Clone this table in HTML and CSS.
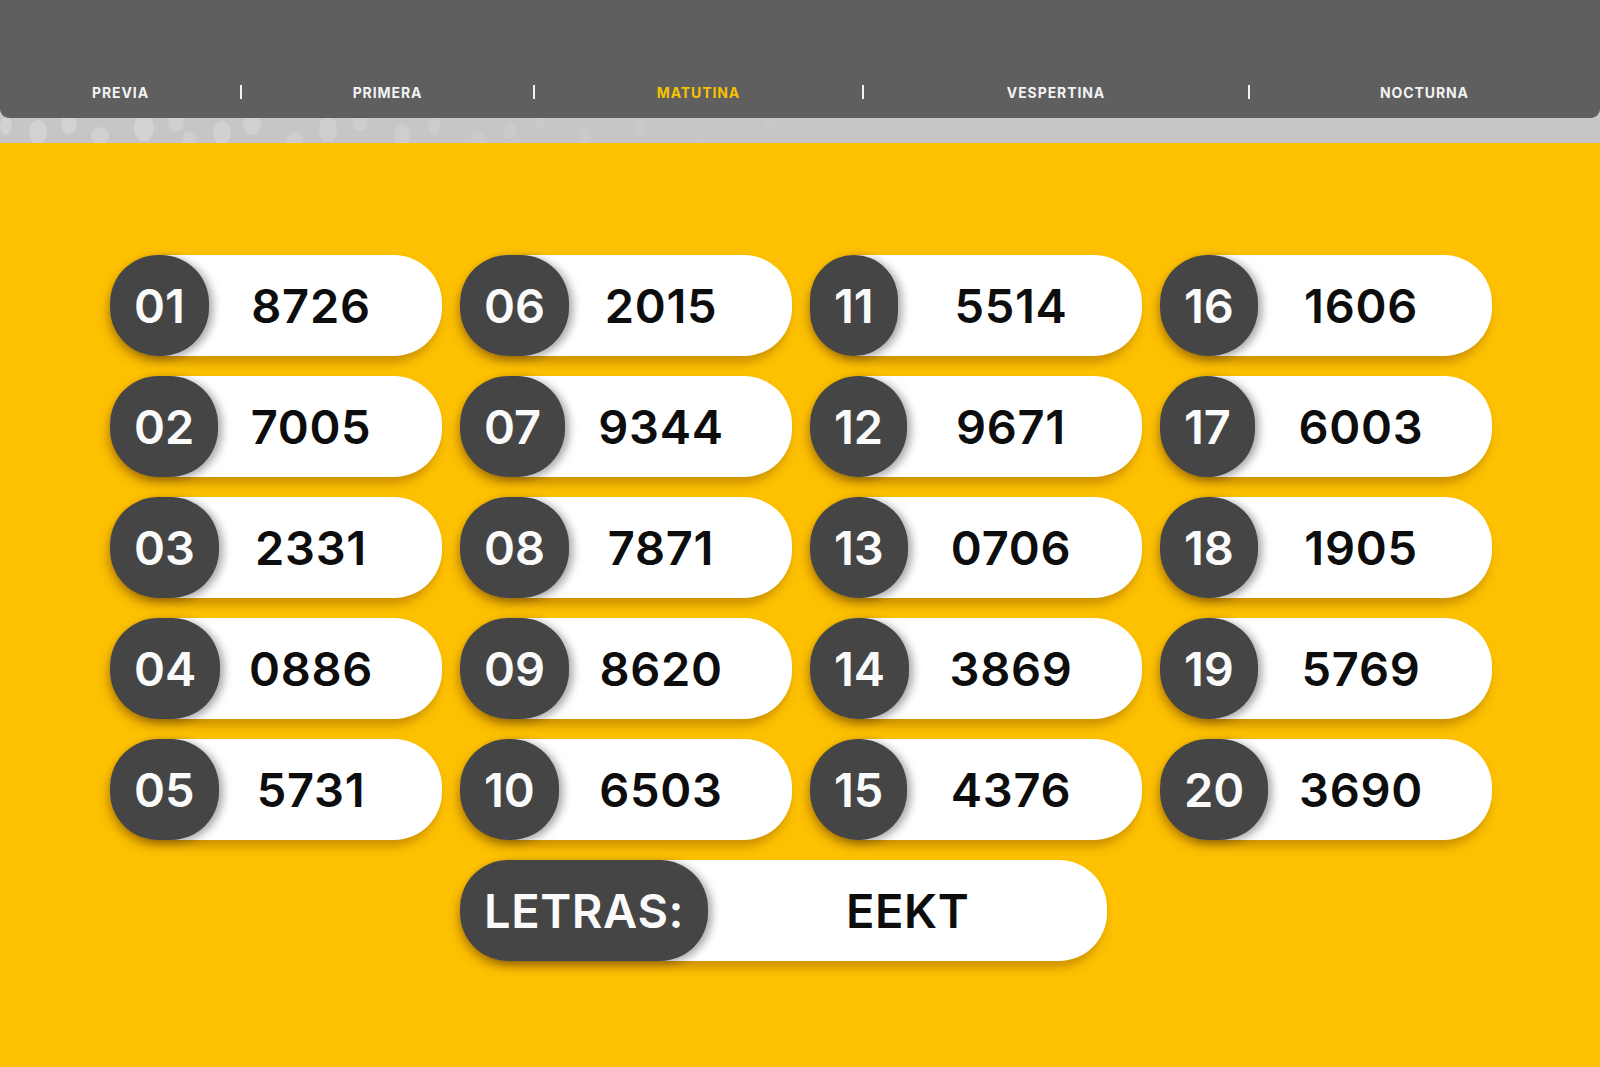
FILE: index.html
```html
<!DOCTYPE html>
<html lang="es">
<head>
<meta charset="utf-8">
<title>Resultados</title>
<link rel="stylesheet" href="styles.css">
</head>
<body>
<header class="top">
  <nav class="nav">
    <div class="nav-cell"><span class="nav-item">PREVIA</span></div>
    <div class="nav-cell sep"><span class="nav-item">PRIMERA</span></div>
    <div class="nav-cell sep"><span class="nav-item active">MATUTINA</span></div>
    <div class="nav-cell sep"><span class="nav-item">VESPERTINA</span></div>
    <div class="nav-cell sep"><span class="nav-item">NOCTURNA</span></div>
  </nav>
  <div class="strip">
    <svg class="dots" width="1600" height="26" viewBox="0 0 1600 26">
      <g fill="#dcdcdc">
        <ellipse cx="6" cy="8" rx="6" ry="9" opacity=".55"/>
        <ellipse cx="38" cy="14" rx="9" ry="12" opacity=".55"/>
        <ellipse cx="69" cy="6" rx="8" ry="10" opacity=".55"/>
        <ellipse cx="100" cy="18" rx="9" ry="9" opacity=".45"/>
        <ellipse cx="144" cy="10" rx="10" ry="13" opacity=".55"/>
        <ellipse cx="176" cy="5" rx="8" ry="9" opacity=".4"/>
        <ellipse cx="189" cy="21" rx="7" ry="7" opacity=".4"/>
        <ellipse cx="222" cy="15" rx="9" ry="12" opacity=".5"/>
        <ellipse cx="252" cy="6" rx="9" ry="11" opacity=".45"/>
        <ellipse cx="295" cy="22" rx="8" ry="8" opacity=".35"/>
        <ellipse cx="328" cy="11" rx="9" ry="13" opacity=".4"/>
        <ellipse cx="360" cy="5" rx="8" ry="8" opacity=".35"/>
        <ellipse cx="402" cy="17" rx="8" ry="11" opacity=".35"/>
        <ellipse cx="434" cy="8" rx="6" ry="9" opacity=".3"/>
        <ellipse cx="478" cy="21" rx="7" ry="7" opacity=".25"/>
        <ellipse cx="510" cy="12" rx="6" ry="9" opacity=".25"/>
        <ellipse cx="540" cy="4" rx="5" ry="6" opacity=".2"/>
        <ellipse cx="585" cy="18" rx="6" ry="8" opacity=".18"/>
        <ellipse cx="640" cy="9" rx="6" ry="8" opacity=".14"/>
        <ellipse cx="700" cy="16" rx="6" ry="8" opacity=".1"/>
        <ellipse cx="770" cy="7" rx="6" ry="7" opacity=".07"/>
      </g>
    </svg>
  </div>
</header>

<main class="board">
  <div class="pill r1 c1"><span class="badge">01</span><span class="num">8726</span></div>
  <div class="pill r2 c1"><span class="badge">02</span><span class="num">7005</span></div>
  <div class="pill r3 c1"><span class="badge">03</span><span class="num">2331</span></div>
  <div class="pill r4 c1"><span class="badge">04</span><span class="num">0886</span></div>
  <div class="pill r5 c1"><span class="badge">05</span><span class="num">5731</span></div>

  <div class="pill r1 c2"><span class="badge">06</span><span class="num">2015</span></div>
  <div class="pill r2 c2"><span class="badge">07</span><span class="num">9344</span></div>
  <div class="pill r3 c2"><span class="badge">08</span><span class="num">7871</span></div>
  <div class="pill r4 c2"><span class="badge">09</span><span class="num">8620</span></div>
  <div class="pill r5 c2"><span class="badge">10</span><span class="num">6503</span></div>

  <div class="pill r1 c3"><span class="badge">11</span><span class="num">5514</span></div>
  <div class="pill r2 c3"><span class="badge">12</span><span class="num">9671</span></div>
  <div class="pill r3 c3"><span class="badge">13</span><span class="num">0706</span></div>
  <div class="pill r4 c3"><span class="badge">14</span><span class="num">3869</span></div>
  <div class="pill r5 c3"><span class="badge">15</span><span class="num">4376</span></div>

  <div class="pill r1 c4"><span class="badge">16</span><span class="num">1606</span></div>
  <div class="pill r2 c4"><span class="badge">17</span><span class="num">6003</span></div>
  <div class="pill r3 c4"><span class="badge">18</span><span class="num">1905</span></div>
  <div class="pill r4 c4"><span class="badge">19</span><span class="num">5769</span></div>
  <div class="pill r5 c4"><span class="badge">20</span><span class="num">3690</span></div>

  <div class="letras"><span class="letras-badge">LETRAS:</span><span class="letras-val">EEKT</span></div>
</main>
</body>
</html>
```

FILE: styles.css
```css
* { box-sizing: border-box; }
html, body { margin: 0; padding: 0; }
body {
  width: 1600px;
  height: 1067px;
  overflow: hidden;
  background: #fdc101;
  font-family: Inter, "Open Sans", "Liberation Sans", sans-serif;
}

.top {
  background: #c6c6c6;
}
.nav {
  height: 118px;
  background: #5f5f5f;
  border-radius: 0 0 9px 9px;
  display: grid;
  grid-template-columns: 241px 293px 329px 386px 351px;
  align-items: end;
  padding-bottom: 18px;
}
.nav-cell {
  position: relative;
  display: flex;
  justify-content: center;
  height: 16px;
  align-items: center;
}
.nav-cell.sep::before {
  content: "";
  position: absolute;
  left: -1px;
  top: 1px;
  width: 2px;
  height: 14px;
  background: #f2f2f2;
}
.nav-item {
  color: #f2f2f2;
  font-family: Inter, "Open Sans", sans-serif;
  font-weight: 700;
  font-size: 14px;
  letter-spacing: 0.9px;
}
.nav-item.active { color: #f7c300; }

.strip {
  height: 25px;
  overflow: hidden;
}
.dots { display: block; }

.board {
  display: grid;
  grid-template-columns: repeat(4, 332px);
  grid-auto-rows: 101px;
  column-gap: 18px;
  row-gap: 20px;
  padding: 112px 0 0 110px;
}
.r1 { grid-row: 1; } .r2 { grid-row: 2; } .r3 { grid-row: 3; } .r4 { grid-row: 4; } .r5 { grid-row: 5; }
.c1 { grid-column: 1; } .c2 { grid-column: 2; } .c3 { grid-column: 3; } .c4 { grid-column: 4; }

.pill {
  display: grid;
  align-items: center;
  background: #ffffff;
  border-radius: 50px 48px 48px 50px;
  box-shadow: -3px 7px 10px rgba(140, 80, 0, 0.42);
}
.badge, .num { grid-area: 1 / 1; }
.badge {
  justify-self: start;
  height: 101px;
  padding: 0 24px;
  display: flex;
  align-items: center;
  background: #454545;
  color: #fafafa;
  border-radius: 48px;
  box-shadow: 4px 2px 8px rgba(0, 0, 0, 0.35);
  font-size: 47px;
  font-weight: 570;
  font-variant-numeric: proportional-nums;
  line-height: 1;
  z-index: 1;
}
.num {
  padding-left: 70px;
  text-align: center;
  color: #0d0d0d;
  font-size: 47px;
  font-weight: 570;
  line-height: 1;
  letter-spacing: 0.7px;
  font-variant-numeric: proportional-nums;
}

.letras {
  grid-row: 6;
  grid-column: 2 / 5;
  width: 647px;
  display: flex;
  align-items: center;
  background: #ffffff;
  border-radius: 50px 48px 48px 50px;
  box-shadow: -3px 7px 10px rgba(140, 80, 0, 0.42);
}
.letras-badge {
  height: 101px;
  padding: 0 24px;
  display: flex;
  align-items: center;
  background: #454545;
  color: #fafafa;
  border-radius: 48px;
  box-shadow: 4px 2px 8px rgba(0, 0, 0, 0.35);
  font-size: 47px;
  font-weight: 570;
  line-height: 1;
  letter-spacing: 0.6px;
}
.letras-val {
  flex: 1;
  text-align: center;
  color: #0d0d0d;
  font-size: 47px;
  font-weight: 570;
  line-height: 1;
  letter-spacing: 0.6px;
}
```
